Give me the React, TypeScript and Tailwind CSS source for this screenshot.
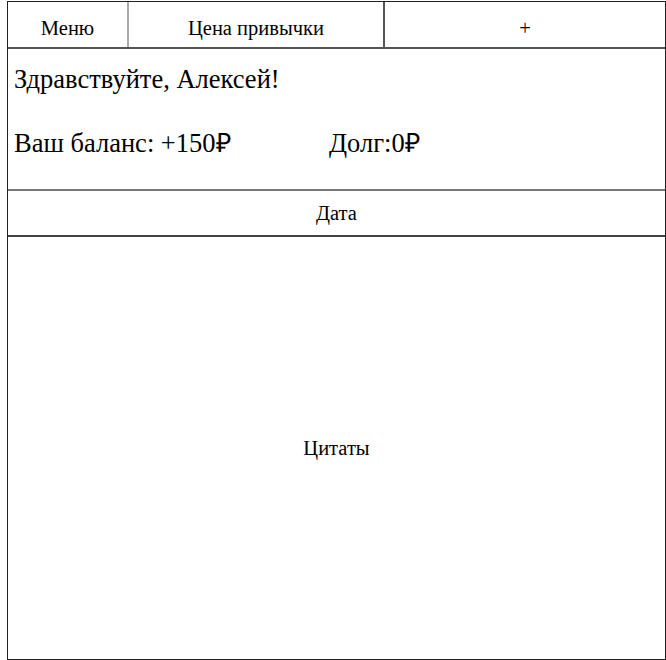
import React from "react";

export default function App() {
  const serif = { fontFamily: '"Liberation Serif", "Times New Roman", serif' };
  return (
    <div className="w-[666px] h-[660px] bg-white pl-[7px] pt-[1px]">
      <div className="w-[659px] h-[659px] border border-[#222] flex flex-col">
        <div className="flex h-[47px] border-b-2 border-[#555] text-[20.5px] text-black" style={serif}>
          <div className="w-[121px] flex items-center justify-center border-r-2 border-[#aaa] pt-[7px]">Меню</div>
          <div className="w-[256px] flex items-center justify-center border-r-2 border-[#555] pt-[7px]">Цена привычки</div>
          <div className="flex-1 flex items-center justify-center pt-[7px]">+</div>
        </div>
        <div className="h-[142px] border-b-2 border-[#777] px-[6px] pt-[15px] text-black text-[26.5px] leading-[30px]" style={serif}>
          <div>Здравствуйте, Алексей!</div>
          <div className="flex mt-[34px]">
            <div className="w-[315px]">Ваш баланс: +150₽</div>
            <div>Долг:0₽</div>
          </div>
        </div>
        <div className="h-[46px] border-b-2 border-[#444] flex items-center justify-center text-[20.5px] text-black" style={serif}>
          Дата
        </div>
        <div className="flex-1 flex items-center justify-center text-[20.5px] text-black" style={serif}>
          Цитаты
        </div>
      </div>
    </div>
  );
}
